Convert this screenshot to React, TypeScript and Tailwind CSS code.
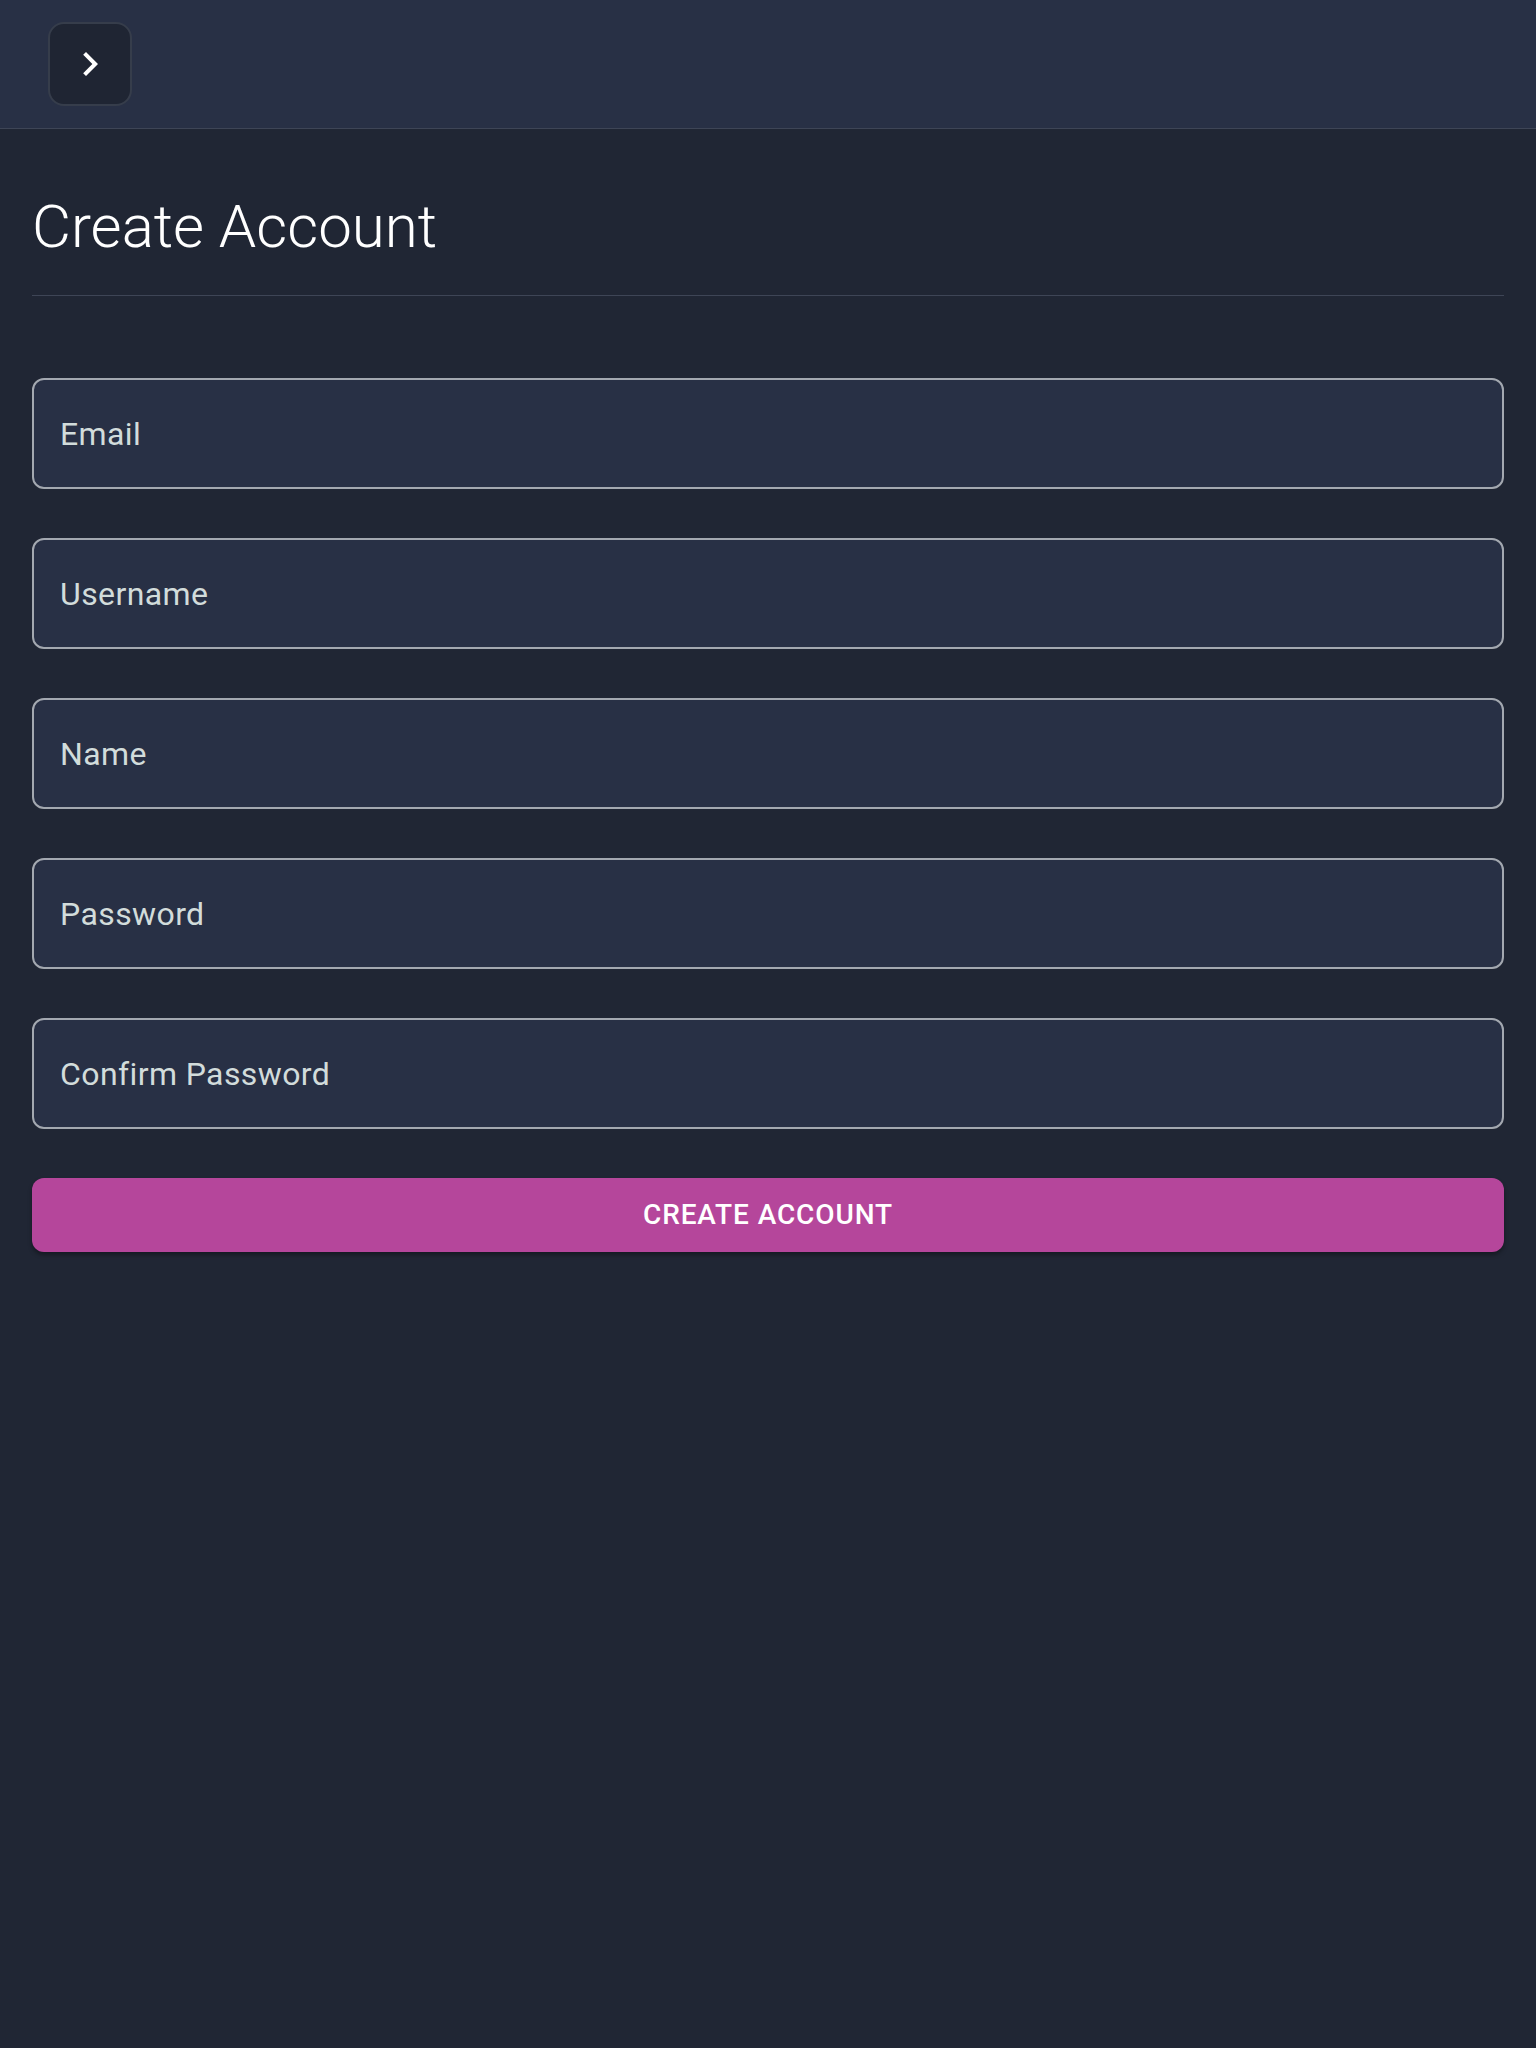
import React from "react";

export default function App() {
  const fields = ["Email", "Username", "Name", "Password", "Confirm Password"];
  return (
    <div className="min-h-[2048px] w-full bg-[#202634]" style={{ fontFamily: "Roboto, 'Liberation Sans', sans-serif" }}>
      <header className="h-[129px] bg-[#283045] border-b border-[#3e4556] flex items-start pl-[48px] pt-[22px]">
        <button className="w-[84px] h-[84px] rounded-[16px] bg-[#1f2533] border-2 border-[#363d4b] flex items-center justify-center">
          <svg width="48" height="48" viewBox="0 0 24 24" fill="white">
            <path d="M10 6 8.59 7.41 13.17 12l-4.58 4.59L10 18l6-6z" />
          </svg>
        </button>
      </header>
      <main className="px-[32px]">
        <h1 className="pt-[58px] pb-[28px] text-[60px] font-light leading-[80px] text-white">Create Account</h1>
        <div className="h-px bg-[#3e4556]" />
        <div className="pt-[82px] flex flex-col gap-[49px]">
          {fields.map((f) => (
            <div key={f} className="h-[111px] rounded-[12px] border-2 border-[#a3a8b0] bg-[#283045] flex items-center pl-[26px] text-[32px] tracking-[0.4px] text-[#d2dcdb]">
              {f}
            </div>
          ))}
        </div>
        <button className="mt-[49px] w-full h-[74px] rounded-[12px] bg-[#b5469b] text-white text-[28px] font-medium tracking-[0.9px] shadow-[0_3px_4px_rgba(0,0,0,0.35)] flex items-center justify-center">
          CREATE ACCOUNT
        </button>
      </main>
    </div>
  );
}
